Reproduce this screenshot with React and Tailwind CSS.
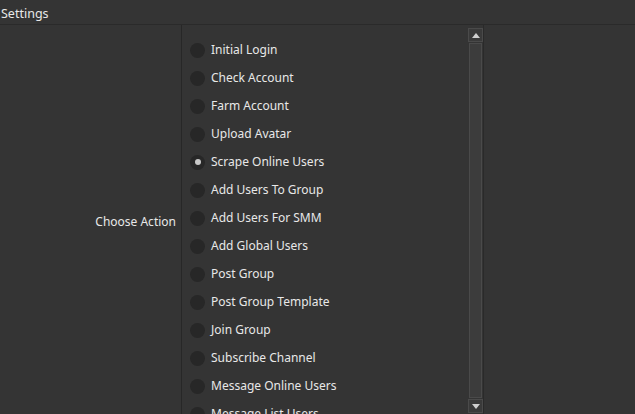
import React from "react";

const items = [
  "Initial Login",
  "Check Account",
  "Farm Account",
  "Upload Avatar",
  "Scrape Online Users",
  "Add Users To Group",
  "Add Users For SMM",
  "Add Global Users",
  "Post Group",
  "Post Group Template",
  "Join Group",
  "Subscribe Channel",
  "Message Online Users",
  "Message List Users",
];

export default function App() {
  return (
    <div
      className="w-[635px] h-[414px] bg-[#343434] text-[#e8e8e8] flex flex-col overflow-hidden text-[12px]"
      style={{ fontFamily: '"Noto Sans", "Open Sans", sans-serif' }}
    >
      <div className="h-[25px] shrink-0 border-b border-[#2a2a2a] flex items-center pl-[1px] pt-[4px] text-[12.5px] leading-none">
        Settings
      </div>
      <div className="flex flex-1 min-h-0">
        <div className="w-[182px] shrink-0 border-r border-[#272727] flex items-center justify-end pr-[5px] pt-[5px]">
          Choose Action
        </div>
        <div className="w-[286px] shrink-0 overflow-hidden pt-[11px]">
          {items.map((t, i) => (
            <div key={t} className="h-[28px] flex items-center pl-[8px]">
              <span className="w-[15px] h-[15px] rounded-full bg-[#272727] flex items-center justify-center shrink-0">
                {i === 4 && <span className="w-[6px] h-[6px] rounded-full bg-[#c8c8c8]" />}
              </span>
              <span className="ml-[6px] whitespace-nowrap">{t}</span>
            </div>
          ))}
        </div>
        <div className="w-[16px] shrink-0 flex flex-col pt-[3px] pb-[1px] border-r border-[#2a2a2a]">
          <div className="h-[14px] border border-[#4a4a4a] bg-[#3a3a3a] flex items-center justify-center shrink-0">
            <svg width="8" height="5" viewBox="0 0 8 5"><path d="M4 0L8 5H0Z" fill="#d0d0d0" /></svg>
          </div>
          <div className="flex-1 mx-[1px] my-[1px] border border-[#4a4a4a] bg-[#3c3c3c]" />
          <div className="h-[14px] border border-[#4a4a4a] bg-[#3a3a3a] flex items-center justify-center shrink-0">
            <svg width="8" height="5" viewBox="0 0 8 5"><path d="M0 0H8L4 5Z" fill="#d0d0d0" /></svg>
          </div>
        </div>
        <div className="flex-1" />
      </div>
    </div>
  );
}
